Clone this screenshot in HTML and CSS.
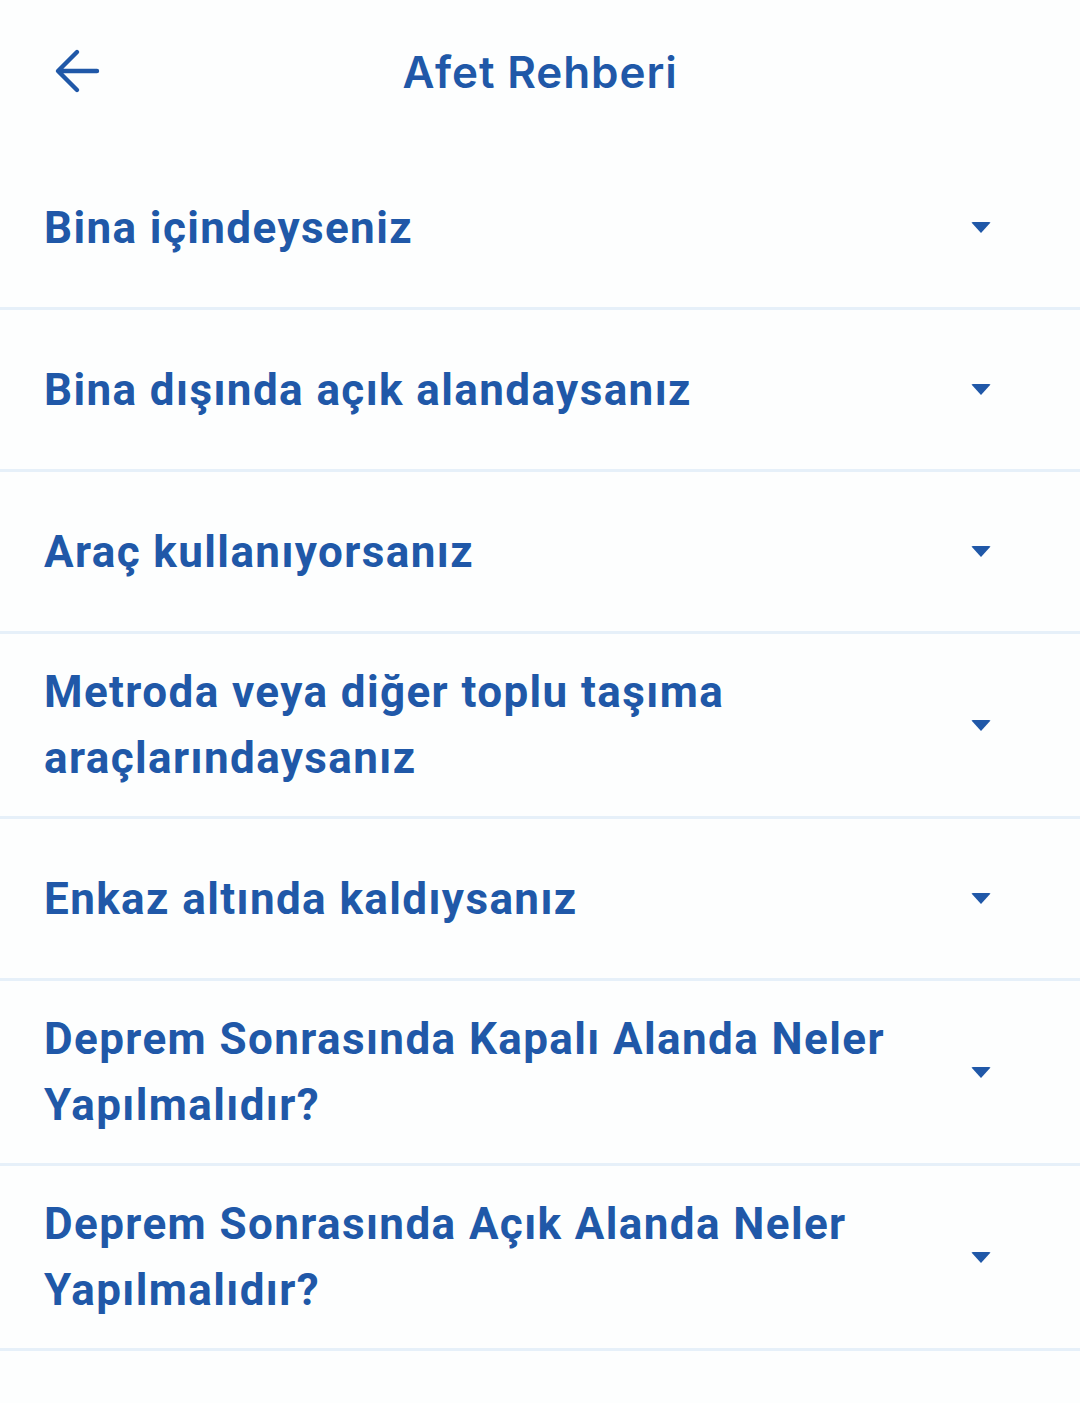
FILE: index.html
```html
<!DOCTYPE html>
<html lang="tr">
<head>
<meta charset="utf-8">
<link rel="stylesheet" href="styles.css">
</head>
<body>
<div class="app">
  <header class="topbar">
    <button class="back" aria-label="Geri">
      <svg width="48" height="48" viewBox="0 0 48 48"><path d="M44 24H6M24 5L5 24l19 19" fill="none" stroke="#2058a8" stroke-width="4.4" stroke-linecap="round" stroke-linejoin="round"/></svg>
    </button>
    <h1 class="title">Afet Rehberi</h1>
  </header>
  <ul class="list">
    <li class="item"><span class="label">Bina içindeyseniz</span><span class="caret"></span></li>
    <li class="item"><span class="label">Bina dışında açık alandaysanız</span><span class="caret"></span></li>
    <li class="item"><span class="label">Araç kullanıyorsanız</span><span class="caret"></span></li>
    <li class="item"><span class="label">Metroda veya diğer toplu taşıma araçlarındaysanız</span><span class="caret"></span></li>
    <li class="item"><span class="label">Enkaz altında kaldıysanız</span><span class="caret"></span></li>
    <li class="item"><span class="label">Deprem Sonrasında Kapalı Alanda Neler Yapılmalıdır?</span><span class="caret"></span></li>
    <li class="item"><span class="label">Deprem Sonrasında Açık Alanda Neler Yapılmalıdır?</span><span class="caret"></span></li>
  </ul>
</div>
</body>
</html>
```

FILE: styles.css
```css
* { box-sizing: border-box; }
html, body { margin: 0; padding: 0; background: #fdfefe; }
.app { width: 1080px; min-height: 1403px; color: #2058a8; }
.topbar {
  height: 148px;
  display: flex;
  align-items: center;
  position: relative;
  padding-left: 53px;
  padding-bottom: 6px;
}
.back {
  border: 0; background: none; padding: 0; margin: 0;
  width: 48px; height: 48px; display: flex;
}
.title {
  position: absolute;
  left: 0; right: 0; top: 42px;
  margin: 0;
  text-align: center;
  font-family: "Inter", "Noto Sans", sans-serif;
  font-weight: 600;
  font-size: 44px;
  line-height: 60px;
  letter-spacing: 0.9px;
  pointer-events: none;
}
.list { list-style: none; margin: 0; padding: 0; }
.item {
  display: flex;
  align-items: center;
  min-height: 162px;
  padding: 25px 0 25px 44px;
  border-bottom: 3px solid #e6f0f9;
}
.label {
  flex: 1;
  padding-right: 40px;
  font-family: "Roboto", "Liberation Sans", sans-serif;
  font-weight: 700;
  font-size: 44px;
  line-height: 66px;
  letter-spacing: 1.4px;
}
.caret {
  flex: none;
  width: 0; height: 0;
  margin-right: 89px;
  border-left: 10px solid transparent;
  border-right: 10px solid transparent;
  border-top: 11px solid #2058a8;
  border-radius: 2px;
}
```
